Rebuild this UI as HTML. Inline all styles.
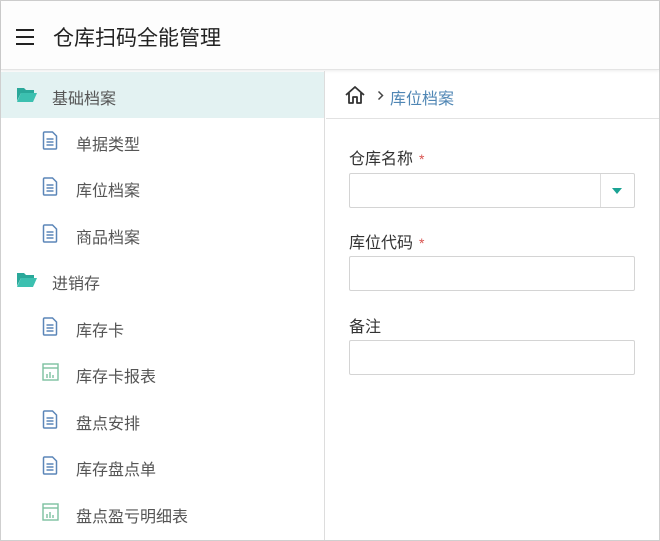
<!DOCTYPE html>
<html><head><meta charset="utf-8"><style>
*{box-sizing:border-box;margin:0;padding:0}
body{width:660px;height:541px;background:#fff;font-family:"Liberation Sans","Noto Sans CJK SC",sans-serif;position:relative;overflow:hidden}
.frame{position:absolute;left:0;top:0;width:660px;height:541px;border:1px solid #cfcfcf}
.hdr{position:absolute;left:1px;top:1px;width:658px;height:69px;background:#fdfdfd;border-bottom:1px solid #e4e4e4;box-shadow:0 1px 3px rgba(0,0,0,.08)}
.hdr .t{position:absolute;left:52px;top:21px;font-size:21px;color:#222}
.burger{position:absolute;left:15px;top:28px;width:18px}
.burger i{display:block;height:2px;background:#222;margin-bottom:5px}
.side{position:absolute;left:1px;top:71px;width:324px;height:469px;border-right:1px solid #ddd}
.row{position:absolute;left:0;width:323px;height:46px;font-size:16px;color:#555}
.row span{position:absolute;top:13px}
.sel{background:#e3f2f2}
.main .bc{position:absolute;left:326px;top:72px;width:333px;height:47px;border-bottom:1px solid #e2e2e2}
.lbl{position:absolute;left:349px;font-size:16px;color:#333}
.lbl b{color:#d9534f;font-weight:normal;font-size:14px;margin-left:6px}
.inp{position:absolute;left:349px;width:286px;height:35px;border:1px solid #d4d4d4;border-radius:2px}
</style></head><body>
<div class="frame"></div>
<div class="hdr"><div class="burger"><i></i><i></i><i></i></div><div class="t">仓库扫码全能管理</div></div>
<div class="side">
<div class="row sel" style="top:1px"><svg style="position:absolute;left:16px;top:15px" width="20" height="16" viewBox="0 0 20 16"><path d="M0 1h7l2 2h8v3H4L0 14z" fill="#2aa89a"/><path d="M4 6h16l-4 9H0z" fill="#3cc0b0"/></svg><span style="left:51px">基础档案</span></div>
</div>
<svg width="0" height="0" style="position:absolute"><defs>
<g id="doc"><path d="M2.5 1h8l4 4v12a1 1 0 0 1-1 1h-11a1 1 0 0 1-1-1v-15a1 1 0 0 1 1-1z" fill="#fff" stroke="#5b86b8" stroke-width="1.5"/><path d="M4.5 8h7M4.5 11h7M4.5 14h7" stroke="#5b86b8" stroke-width="1.5"/></g>
<g id="rep"><rect x="1" y="1" width="15" height="16" fill="#fff" stroke="#7cc0a0" stroke-width="1.4"/><path d="M1 5h15" stroke="#7cc0a0" stroke-width="1.4"/><path d="M5 15v-4M8 15v-6M11 15v-3" stroke="#7cc0a0" stroke-width="1.4"/></g>
</defs></svg>
<div style="position:absolute;left:1px;top:71px">
<div class="row" style="top:47px"><svg style="position:absolute;left:41px;top:13px" width="17" height="19" viewBox="0 0 17 19"><use href="#doc"/></svg><span style="left:75px">单据类型</span></div>
<div class="row" style="top:93px"><svg style="position:absolute;left:41px;top:13px" width="17" height="19" viewBox="0 0 17 19"><use href="#doc"/></svg><span style="left:75px">库位档案</span></div>
<div class="row" style="top:140px"><svg style="position:absolute;left:41px;top:13px" width="17" height="19" viewBox="0 0 17 19"><use href="#doc"/></svg><span style="left:75px">商品档案</span></div>
<div class="row" style="top:186px"><svg style="position:absolute;left:16px;top:15px" width="20" height="16" viewBox="0 0 20 16"><path d="M0 1h7l2 2h8v3H4L0 14z" fill="#2aa89a"/><path d="M4 6h16l-4 9H0z" fill="#3cc0b0"/></svg><span style="left:51px">进销存</span></div>
<div class="row" style="top:233px"><svg style="position:absolute;left:41px;top:13px" width="17" height="19" viewBox="0 0 17 19"><use href="#doc"/></svg><span style="left:75px">库存卡</span></div>
<div class="row" style="top:279px"><svg style="position:absolute;left:41px;top:13px" width="17" height="19" viewBox="0 0 17 19"><use href="#rep"/></svg><span style="left:75px">库存卡报表</span></div>
<div class="row" style="top:326px"><svg style="position:absolute;left:41px;top:13px" width="17" height="19" viewBox="0 0 17 19"><use href="#doc"/></svg><span style="left:75px">盘点安排</span></div>
<div class="row" style="top:372px"><svg style="position:absolute;left:41px;top:13px" width="17" height="19" viewBox="0 0 17 19"><use href="#doc"/></svg><span style="left:75px">库存盘点单</span></div>
<div class="row" style="top:419px"><svg style="position:absolute;left:41px;top:13px" width="17" height="19" viewBox="0 0 17 19"><use href="#rep"/></svg><span style="left:75px">盘点盈亏明细表</span></div>
</div>
<div class="main">
<div class="bc"><svg style="position:absolute;left:18px;top:13px" width="22" height="20" viewBox="0 0 22 20"><path d="M2 10L11 2l9 8M5 8v10h4v-6h4v6h4V8" fill="none" stroke="#333" stroke-width="1.8" stroke-linejoin="round"/></svg><svg style="position:absolute;left:51px;top:18px" width="8" height="11" viewBox="0 0 8 11"><path d="M1.5 1.5l4 4-4 4" fill="none" stroke="#444" stroke-width="1.5"/></svg><span style="position:absolute;left:64px;top:13px;font-size:16px;color:#4f86b4">库位档案</span></div>
<div class="lbl" style="top:145px">仓库名称<b>*</b></div>
<div class="inp" style="top:173px"><div style="position:absolute;left:250px;top:0;width:1px;height:33px;background:#ddd"></div><div style="position:absolute;left:262px;top:14px;border-left:5px solid transparent;border-right:5px solid transparent;border-top:6px solid #1aa394"></div></div>
<div class="lbl" style="top:229px">库位代码<b>*</b></div>
<div class="inp" style="top:256px"></div>
<div class="lbl" style="top:313px">备注</div>
<div class="inp" style="top:340px"></div>
</div>
</body></html>
